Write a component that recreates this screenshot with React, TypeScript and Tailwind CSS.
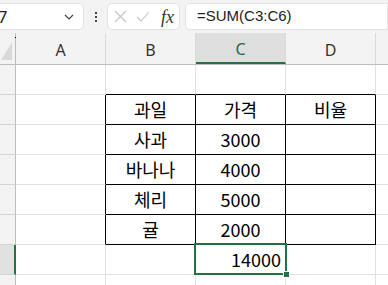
import React from 'react';

const cellFont = { fontFamily: '"Noto Sans CJK KR", "Noto Sans", sans-serif' };

type Cell = { text?: string; align?: 'center' | 'right'; box?: boolean };

// 표 데이터 (B~D 열)
const rows: Cell[][] = [
  [{}, {}, {}, {}],
  [{}, { text: '과일', box: true }, { text: '가격', box: true }, { text: '비율', box: true }],
  [{}, { text: '사과', box: true }, { text: '3000', box: true }, { box: true }],
  [{}, { text: '바나나', box: true }, { text: '4000', box: true }, { box: true }],
  [{}, { text: '체리', box: true }, { text: '5000', box: true }, { box: true }],
  [{}, { text: '귤', box: true }, { text: '2000', box: true }, { box: true }],
  [{}, {}, { text: '14000', align: 'right' }, {}],
  [{}, {}, {}, {}],
];

function GridCell({ cell, rightBlack, bottomBlack }: { cell: Cell; rightBlack: boolean; bottomBlack: boolean }) {
  return (
    <div
      className={`w-[90px] h-full shrink-0 border-r border-b flex items-center text-[18px] text-black ${
        rightBlack ? 'border-r-black' : 'border-r-[#e1e1e1]'
      } ${bottomBlack ? 'border-b-black' : 'border-b-[#e1e1e1]'} ${
        cell.align === 'right' ? 'justify-end pr-[4px]' : 'justify-center'
      }`}
      style={cellFont}
    >
      {cell.text}
    </div>
  );
}

export default function App() {
  return (
    <div className="w-[388px] h-[285px] overflow-hidden bg-white relative" style={{ fontFamily: '"Noto Sans", "Liberation Sans", sans-serif' }}>
      {/* 수식 입력줄 */}
      <div className="h-[33px] bg-[#f3f3f3] flex items-start pt-[3px]">
        <div className="-ml-[20px] w-[104px] h-[27px] shrink-0 bg-white border border-[#e3e3e3] rounded-[5px] flex items-center justify-between pl-[6px] pr-[9px]">
          <span className="text-[17px] text-[#222] leading-none">C7</span>
          <svg width="10" height="6" viewBox="0 0 10 6" fill="none" stroke="#444" strokeWidth="1.2">
            <path d="M1 1l4 4 4-4" />
          </svg>
        </div>
        <div className="w-[23px] h-[27px] flex flex-col items-center justify-center gap-[2px]">
          <span className="w-[2px] h-[2px] bg-[#444]" />
          <span className="w-[2px] h-[2px] bg-[#444]" />
          <span className="w-[2px] h-[2px] bg-[#444]" />
        </div>
        <div className="w-[73px] h-[27px] bg-white border border-[#e3e3e3] rounded-[5px] flex items-center pl-[6px] gap-[9px]">
          <svg width="13" height="13" viewBox="0 0 13 13" stroke="#c4c4c4" strokeWidth="1.1">
            <path d="M1 1l11 11M12 1L1 12" />
          </svg>
          <svg width="14" height="11" viewBox="0 0 14 11" fill="none" stroke="#c4c4c4" strokeWidth="1.1">
            <path d="M1 6l4 4 8-9" />
          </svg>
          <span className="italic text-[18px] leading-none text-[#333] ml-[2px]" style={{ fontFamily: '"Liberation Serif", serif' }}>
            fx
          </span>
        </div>
        <div className="ml-[5px] flex-1 h-[27px] bg-white border border-[#e3e3e3] rounded-l-[5px] flex items-center pl-[11px]">
          <span className="text-[15px] text-[#222]" style={{ fontFamily: '"Liberation Sans", sans-serif' }}>
            =SUM(C3:C6)
          </span>
        </div>
      </div>

      {/* 열 머리글 */}
      <div className="h-[32px] flex bg-[#f3f3f3] border-b border-b-[#bdbdbd]">
        <div className="w-[16px] h-full shrink-0 border-r border-r-[#bdbdbd] relative">
          <span className="absolute left-[15px] top-[4px] w-[1px] h-[1px] bg-black" />
          <div className="absolute left-[1px] top-[9px] w-[11px] h-[18px] bg-[#d9d9d9] [clip-path:polygon(100%_0,100%_100%,0_100%)]" />
        </div>
        {['A', 'B', 'C', 'D', ''].map((c, i) => (
          <div
            key={i}
            className={`w-[90px] h-full shrink-0 border-r border-r-[#dadada] flex items-center justify-center text-[16px] pt-[2px] ${
              c === 'C' ? 'bg-[#dedede] border-b-2 border-b-[#217346] text-[#1e6b41]' : 'text-[#333]'
            }`}
          >
            {c}
          </div>
        ))}
      </div>

      {/* 행 */}
      {rows.map((row, r) => (
        <div key={r} className="h-[30px] flex">
          <div
            className={`w-[16px] h-full shrink-0 border-b border-b-[#d4d4d4] ${
              r === 6 ? 'bg-[#e1e1e1] border-r-2 border-r-[#217346]' : 'bg-[#f3f3f3] border-r border-r-[#bdbdbd]'
            }`}
          />
          {row.map((cell, c) => {
            const next = row[c + 1];
            const below = rows[r + 1]?.[c];
            return (
              <GridCell
                key={c}
                cell={cell}
                rightBlack={!!cell.box || !!next?.box}
                bottomBlack={!!cell.box || !!below?.box}
              />
            );
          })}
          <div className="w-[90px] h-full shrink-0 border-r border-b border-[#e1e1e1]" />
        </div>
      ))}

      {/* 선택 영역 */}
      <div className="absolute left-[194px] top-[243px] w-[93px] h-[32px] border-2 border-[#217346]" />
      <div className="absolute left-[283px] top-[271px] w-[7px] h-[7px] bg-[#217346] border border-white" />
    </div>
  );
}
